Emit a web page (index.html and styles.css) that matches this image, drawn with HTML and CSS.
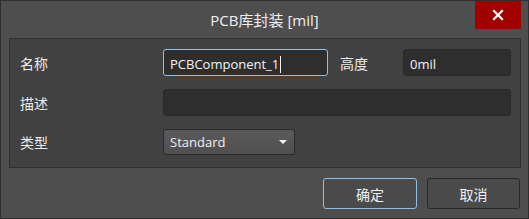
FILE: index.html
```html
<!DOCTYPE html>
<html>
<head>
<meta charset="utf-8">
<link rel="stylesheet" href="styles.css">
</head>
<body>
<div class="window">
  <div class="titlebar">
    <div class="title">PCB库封装 [mil]</div>
    <div class="close">
      <svg width="12" height="12" viewBox="0 0 12 12"><path d="M2 2 L10 10 M10 2 L2 10" stroke="#fff" stroke-width="2.2" stroke-linecap="square"/></svg>
    </div>
  </div>
  <div class="panel">
    <div class="row">
      <div class="label">名称</div>
      <div class="input focus name">PCBComponent_1<span class="caret"></span></div>
      <div class="label2">高度</div>
      <div class="input height">0mil</div>
    </div>
    <div class="row">
      <div class="label">描述</div>
      <div class="input desc"></div>
    </div>
    <div class="row row3">
      <div class="label">类型</div>
      <div class="select">Standard<span class="arrow"></span></div>
    </div>
  </div>
  <div class="buttons">
    <div class="btn primary">确定</div>
    <div class="btn">取消</div>
  </div>
</div>
</body>
</html>
```
FILE: styles.css
```css
* { box-sizing: border-box; }
html, body { margin: 0; padding: 0; background: #4d4d4d; }
body { font-family: "Open Sans", "Noto Sans CJK SC", sans-serif; color: #ececec; }
.window {
  width: 529px; height: 219px;
  background: #4e4e4e;
  border: 1px solid #2e2e2e;
  display: flex; flex-direction: column;
}
.titlebar {
  height: 36px;
  position: relative;
  display: flex; align-items: center; justify-content: center;
}
.title { font-size: 15px; color: #f0f0f0; padding-top: 1px; }
.close {
  position: absolute; right: 7px; top: 0;
  width: 46px; height: 28px;
  background: #a00000;
  display: flex; align-items: center; justify-content: center;
}
.panel {
  margin: 1px 7px 0 8px;
  height: 130px;
  background: #414141;
  border: 1px solid #303030;
  padding: 10px 0 0 10px;
}
.row { display: flex; align-items: center; height: 27px; margin-bottom: 13px; }
.row3 { margin-top: 2px; height: 26px; }
.label { width: 143px; font-size: 14px; padding-left: 0; }
.label2 { width: 75px; font-size: 14px; padding-left: 12px; }
.input {
  height: 27px;
  background: #2e2e2e;
  border: 1px solid #282828;
  border-radius: 3px;
  font-size: 13px;
  padding: 3px 6px 0 6px;
  color: #f2f2f2;
  display: flex; align-items: center;
}
.input.focus { border-color: #8ec0ec; }
.name { width: 165px; }
.height { width: 108px; }
.desc { width: 348px; }
.caret { display: inline-block; width: 1px; height: 17px; background: #f0f0f0; margin-left: 1px; }
.select {
  width: 132px; height: 26px;
  background: linear-gradient(#5a5a5a, #4f4f4f);
  border: 1px solid #2a2a2a;
  border-radius: 3px;
  font-size: 13px;
  padding: 0 6px;
  display: flex; align-items: center; justify-content: space-between;
  color: #f0f0f0;
}
.arrow { width: 0; height: 0; border-left: 4px solid transparent; border-right: 4px solid transparent; border-top: 4px solid #f4f4f4; margin-right: 1px; }
.buttons {
  display: flex; justify-content: flex-end; gap: 10px;
  padding: 10px 8px 0 0;
}
.btn {
  width: 93px; height: 31px;
  border: 1px solid #282828;
  border-radius: 3px;
  background: #4a4a4a;
  font-size: 14px;
  display: flex; align-items: center; justify-content: center;
  color: #f0f0f0;
}
.btn.primary { border-color: #8ec0ec; width: 94px; }
```
